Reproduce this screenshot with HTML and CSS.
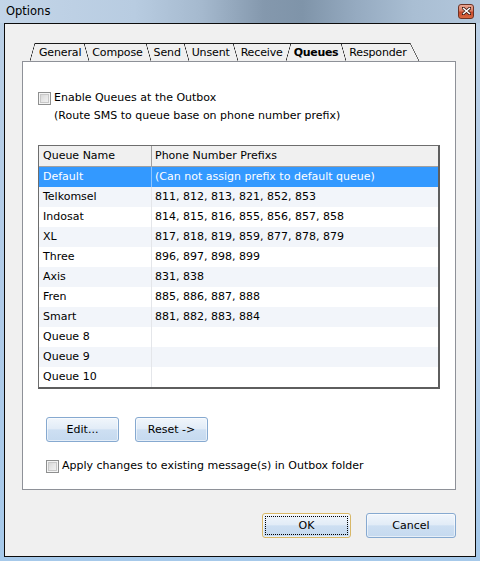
FILE: index.html
```html
<!DOCTYPE html>
<html>
<head>
<meta charset="utf-8">
<title>Options</title>
<link rel="stylesheet" href="styles.css">
</head>
<body>
<div class="window">
  <div class="titlebar">
    <span class="title">Options</span>
    <span class="close"><svg width="9" height="8" viewBox="0 0 9 8"><path d="M1 1 L8 7 M8 1 L1 7" stroke="#3a1a12" stroke-width="3" stroke-linecap="square"/><path d="M1 1 L8 7 M8 1 L1 7" stroke="#fff" stroke-width="1.6"/></svg></span>
  </div>
  <div class="client">
    <div class="tabs">
      <div class="tab first"><span class="lbl">General</span></div>
      <div class="tab"><span class="lbl">Compose</span></div>
      <div class="tab"><span class="lbl">Send</span></div>
      <div class="tab"><span class="lbl">Unsent</span></div>
      <div class="tab presel"><span class="lbl">Receive</span></div>
      <div class="tab sel"><span class="lbl">Queues</span></div>
      <div class="tab last"><span class="lbl">Responder</span></div>
    </div>
    <div class="panel">
      <div class="check-row first-row"><span class="checkbox"></span><span>Enable Queues at the Outbox</span></div>
      <div class="note">(Route SMS to queue base on phone number prefix)</div>
      <table class="grid">
        <thead>
          <tr><th class="c1">Queue Name</th><th class="c2">Phone Number Prefixs</th></tr>
        </thead>
        <tbody>
          <tr class="selected"><td class="c1">Default</td><td class="c2">(Can not assign prefix to default queue)</td></tr>
          <tr class="alt"><td class="c1">Telkomsel</td><td class="c2">811, 812, 813, 821, 852, 853</td></tr>
          <tr><td class="c1">Indosat</td><td class="c2">814, 815, 816, 855, 856, 857, 858</td></tr>
          <tr class="alt"><td class="c1">XL</td><td class="c2">817, 818, 819, 859, 877, 878, 879</td></tr>
          <tr><td class="c1">Three</td><td class="c2">896, 897, 898, 899</td></tr>
          <tr class="alt"><td class="c1">Axis</td><td class="c2">831, 838</td></tr>
          <tr><td class="c1">Fren</td><td class="c2">885, 886, 887, 888</td></tr>
          <tr class="alt"><td class="c1">Smart</td><td class="c2">881, 882, 883, 884</td></tr>
          <tr><td class="c1">Queue 8</td><td class="c2"></td></tr>
          <tr class="alt"><td class="c1">Queue 9</td><td class="c2"></td></tr>
          <tr><td class="c1">Queue 10</td><td class="c2"></td></tr>
        </tbody>
      </table>
      <div class="panel-buttons">
        <button class="btn edit">Edit...</button>
        <button class="btn reset">Reset -&gt;</button>
      </div>
      <div class="check-row apply-row"><span class="checkbox"></span><span>Apply changes to existing message(s) in Outbox folder</span></div>
    </div>
    <div class="dlg-buttons">
      <button class="btn ok">OK</button>
      <button class="btn cancel">Cancel</button>
    </div>
  </div>
</div>
</body>
</html>
```
FILE: styles.css
```css
html, body {
  margin: 0;
  padding: 0;
}
body {
  width: 480px;
  height: 561px;
  overflow: hidden;
  font-family: "DejaVu Sans", Verdana, sans-serif;
  font-size: 11px;
  color: #000;
}
.window {
  width: 480px;
  height: 561px;
  box-sizing: border-box;
  padding: 0 4px 4px 4px;
  display: flex;
  flex-direction: column;
  background: linear-gradient(180deg, #bcd0e5 0px, #b9cfe6 60px, #b0cbe8 300px, #a6c9ea 561px);
}
.titlebar {
  height: 23px;
  margin: 0 -4px;
  padding: 0 6px 0 6px;
  display: flex;
  align-items: center;
  justify-content: space-between;
  background: linear-gradient(90deg, #c3d5e8 0%, #b8cce1 28%, #a5b9ce 42%, #8498ad 55%, #7f94a9 63%, #95aac0 74%, #a9bed3 86%, #b3c7dc 100%);
}
.title {
  font-family: "DejaVu Sans", sans-serif;
  font-size: 11.5px;
  color: #000;
  margin-top: -1px;
}
.close {
  width: 16px;
  height: 15px;
  box-sizing: border-box;
  margin-top: -1px;
  border: 1px solid #6e3325;
  border-radius: 3px;
  background: linear-gradient(180deg, #eaa794 0%, #d97d64 45%, #c7472b 55%, #d8683f 100%);
  display: flex;
  align-items: center;
  justify-content: center;
}
.close svg { display: block; }
.client {
  flex: 1;
  border: 1px solid #0c0c0c;
  background: #f0f0f0;
  display: flex;
  flex-direction: column;
}
/* tabs */
.tabs {
  display: flex;
  height: 18px;
  margin: 19px 0 0 25px;
}
.tab {
  display: flex;
  height: 18px;
}
.tab .lbl {
  box-sizing: border-box;
  height: 18px;
  border-top: 1px solid #1a1a1a;
  padding: 0 3px 0 3px;
  line-height: 17px;
  white-space: nowrap;
  letter-spacing: -0.15px;
}
.tab::after {
  content: "";
  width: 5px;
  height: 18px;
  box-sizing: border-box;
  border-top: 1px solid #1a1a1a;
  background: linear-gradient(to top right, transparent calc(50% - 0.6px), #1a1a1a 50%, transparent calc(50% + 0.6px));
  background-origin: border-box;
}
.tab.first::before,
.tab.sel::before {
  content: "";
  width: 5px;
  height: 18px;
  box-sizing: border-box;
  background: linear-gradient(to bottom right, transparent calc(50% - 0.6px), #1a1a1a 50%, transparent calc(50% + 0.6px));
  background-origin: border-box;
}
.tab.sel::before { border-top: 1px solid #1a1a1a; }
.tab.first .lbl { padding-left: 4px; }
.tab.presel::after { display: none; }
.tab.sel .lbl { font-weight: bold; padding-left: 3px; letter-spacing: -0.3px; }
.tab.last::after { border-top: none; width: 9px; }
/* panel */
.panel {
  box-sizing: border-box;
  width: 434px;
  height: 429px;
  margin-left: 17px;
  border: 1px solid #8e9198;
  background: #fff;
  display: flex;
  flex-direction: column;
  align-items: flex-start;
}
.check-row {
  display: flex;
  align-items: center;
  height: 16px;
  line-height: 16px;
  white-space: nowrap;
}
.first-row {
  margin-top: 28px;
  padding-left: 15px;
}
.checkbox {
  width: 13px;
  height: 13px;
  box-sizing: border-box;
  margin-right: 3px;
  border: 1px solid #8e8f8f;
  background: linear-gradient(135deg, #d0d0d0 0%, #e6e6e6 50%, #f6f6f6 100%);
  box-shadow: inset 0 0 0 1px #f4f4f4, inset 0 0 0 2px #c8c8c8;
}
.note {
  margin-top: 2px;
  padding-left: 31px;
  height: 16px;
  line-height: 16px;
  white-space: nowrap;
}
.grid {
  margin: 21px 0 0 15px;
  width: 402px;
  box-sizing: border-box;
  table-layout: fixed;
  border-collapse: separate;
  border-spacing: 0;
  border-style: solid;
  border-color: #6d6d6d #5e5e5e #5e5e5e #6d6d6d;
  border-width: 1px 2px 2px 1px;
}
.grid th, .grid td {
  padding: 0 0 0 4px;
  white-space: nowrap;
  overflow: hidden;
  text-align: left;
  font-weight: normal;
}
.grid th {
  height: 20px;
  line-height: 20px;
  background: #f0f0f0;
  border-bottom: 1px solid #a0a0a0;
}
.grid th.c1 { border-right: 1px solid #a0a0a0; }
.grid .c1 { width: 108px; }
.grid .c2 { padding-left: 3px; }
.grid td {
  height: 20px;
  line-height: 20px;
}
.grid td.c1 { border-right: 1px solid #e4e6ea; }
.grid tr.alt td { background: #f2f5fa; }
.grid tr.selected td {
  background: #3399ff;
  color: #fff;
}
.grid tr.selected td.c1 { border-right-color: #8cc4ff; }
.panel-buttons {
  display: flex;
  gap: 16px;
  margin: 28px 0 0 23px;
}
.btn {
  height: 25px;
  box-sizing: border-box;
  padding: 0;
  border: 1px solid #86a9d0;
  border-radius: 3px;
  background: linear-gradient(180deg, #f1f6fc 0%, #e2ecf7 46%, #cddff2 52%, #c5d9ef 100%);
  box-shadow: inset 0 0 0 1px rgba(255,255,255,0.55);
  font-family: "DejaVu Sans", Verdana, sans-serif;
  font-size: 11px;
  color: #000;
}
.edit { width: 73px; }
.reset { width: 73px; }
.apply-row {
  margin-top: 16px;
  padding-left: 23px;
}
.dlg-buttons {
  display: flex;
  justify-content: flex-end;
  gap: 15px;
  margin: 23px 19px 0 0;
}
.ok {
  width: 89px;
  border-color: #d8b767;
  outline: 1px dotted #000;
  outline-offset: -4px;
}
.cancel { width: 90px; }
```
